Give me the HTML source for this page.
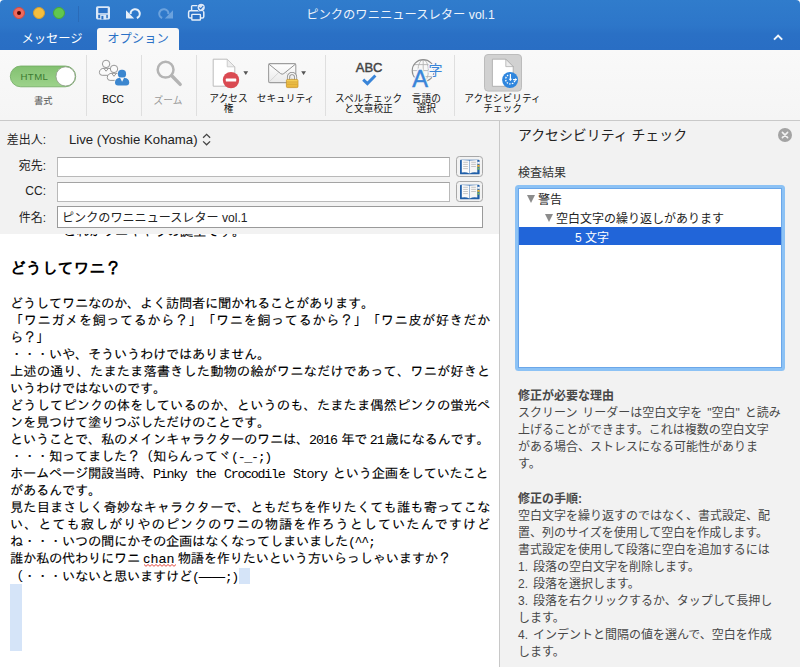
<!DOCTYPE html>
<html lang="ja">
<head>
<meta charset="utf-8">
<title>ピンクのワニニュースレター vol.1</title>
<style>
*{box-sizing:border-box;margin:0;padding:0}
html,body{width:800px;height:667px;overflow:hidden;background:#f2f2f2}
body{font-family:"Liberation Sans","Noto Sans CJK JP",sans-serif;color:#222;position:relative;-webkit-font-smoothing:antialiased}
.abs{position:absolute}
#titlebar{position:absolute;left:0;top:0;width:800px;height:50px;border-radius:4px 4px 0 0;background:linear-gradient(#307ccc 0,#2d76c9 26px,#2a70c5 34px,#296ec4 50px)}
#title{position:absolute;left:0;width:801px;top:6.2px;text-align:center;color:#eef4fb;font-size:12.3px;line-height:18px}
.tl{position:absolute;top:7px;width:12px;height:12px;border-radius:50%}
.tab{position:absolute;top:28px;height:22px;font-size:12.3px;line-height:23px;color:#fff;text-align:center}
#tab2{left:97px;width:82px;background:#f8f8f8;color:#2b71c6;border-radius:3px 3px 0 0}
#ribbon{position:absolute;left:0;top:50px;width:800px;height:71px;background:linear-gradient(#f9f9f9,#f5f5f5);border-bottom:1px solid #c9c9c9}
.sep{position:absolute;top:5px;width:1px;height:61px;background:#dfdfdf}
.lbl{position:absolute;font-size:9.7px;line-height:10px;text-align:center;color:#111;white-space:nowrap;transform:translateX(-50%)}
#hdr{position:absolute;left:0;top:121px;width:499px;height:113px;background:#f2f2f2}
.flabel{position:absolute;width:46px;left:0;text-align:right;font-size:12px;line-height:16px;color:#222}
.inp{position:absolute;left:57px;height:20px;background:#fff;border:1px solid #b9b9b9;border-top-color:#a4a4a4}
.abook{position:absolute;left:456px;width:27px;height:21px;border:1px solid #a8a8a8;border-radius:3.5px;background:#f2f2f2}
#body{position:absolute;left:0;top:234px;width:499px;height:433px;background:#fff;overflow:hidden}
.bl{position:absolute;left:10px;letter-spacing:-0.33px;white-space:pre;font-family:"Liberation Mono","IPAGothic",monospace;font-size:13.33px;line-height:17px;color:#000;-webkit-text-stroke:0.1px #000}
.bl .a{font-family:"Liberation Mono","IPAGothic",monospace;letter-spacing:-1.33px;-webkit-text-stroke:0}
.bl.j{width:480px;text-align:justify;text-align-last:justify}
.bl.h{font-size:16px;font-weight:bold;line-height:20px;letter-spacing:-0.15px;-webkit-text-stroke:0}
.bl .d{letter-spacing:-1px;-webkit-text-stroke:0}
.bl .k{font-family:"Liberation Sans","IPAGothic",sans-serif}
.bl .w{letter-spacing:-1.28px;word-spacing:1.9px}
.bl .g{display:inline-block;width:3px}
.bl .c{font-family:"Liberation Sans",sans-serif;font-size:13.33px;letter-spacing:0.7px;line-height:10px;}
.sel{position:absolute;background:#d5e4f8}
#vdiv{position:absolute;left:499px;top:121px;width:1px;height:546px;background:#c8c8c8}
#pane{position:absolute;left:500px;top:121px;width:300px;height:546px;background:#f2f2f2}
.pt{position:absolute;white-space:nowrap;color:#333}
.pl{left:18px;font-size:12px;line-height:17px;color:#484848}
#ring{position:absolute;left:15px;top:64px;width:270px;height:186px;background:#8cc2f5;border-radius:3.5px;padding:3px}
#list{position:relative;width:264px;height:180px;background:#fff;border:1px solid #6ba7e9;overflow:hidden}
.row{position:absolute;left:0;width:262px;height:18px;font-size:12px;line-height:17px;color:#222}
.rt{position:absolute;top:0;white-space:nowrap}
.selrow{background:#2165d9;color:#fff;height:18px}
.tri{position:absolute;top:3px;width:0;height:0;border-left:4.5px solid transparent;border-right:4.5px solid transparent;border-top:8px solid #8c8c8c}
</style>
</head>
<body>
<div class="abs" style="left:0;top:0;width:800px;height:8px;background:#fff"></div>
<div id="titlebar">
  <div class="tl" style="left:13px;background:#ee6a5e;border:0.5px solid #cf4c42"></div>
  <div class="tl" style="left:33px;background:#f5be3f;border:0.5px solid #d6a030"></div>
  <div class="tl" style="left:53px;background:#61c74f;border:0.5px solid #4aa83a"></div>
  <div class="abs" style="left:15px;top:9px;width:8px;height:8px"><div style="margin:2px;width:4px;height:4px;border-radius:50%;background:#4d0502"></div></div>
  <div class="abs" style="left:78px;top:6px;width:1px;height:16px;background:#2a6bb8"></div>
  <svg class="abs" style="left:0;top:0" width="800" height="28" viewBox="0 0 800 28">
    <!-- save -->
    <rect x="96" y="6.2" width="14" height="13.2" rx="1.6" fill="#dbe8f7"/>
    <rect x="98.3" y="8" width="9.4" height="5.2" fill="#2b71c6"/>
    <rect x="98.2" y="14.7" width="9.6" height="3.5" fill="#2b71c6"/>
    <rect x="100.2" y="14.7" width="6.1" height="4.7" fill="#dbe8f7"/>
    <rect x="101.4" y="15.9" width="2" height="3.5" fill="#2b71c6"/>
    <!-- undo -->
    <path d="M126 10.3 L126 18.4 L134.2 18.4 Z" fill="#e6eff9"/>
    <path d="M130.6 14.2 A4.6 4.6 0 1 1 136.8 18.1" fill="none" stroke="#e6eff9" stroke-width="2.1"/>
    <!-- redo -->
    <path d="M173 10.3 L173 18.4 L164.8 18.4 Z" fill="#6ba2dd"/>
    <path d="M168.4 14.2 A4.6 4.6 0 1 0 162.2 18.1" fill="none" stroke="#6ba2dd" stroke-width="2.1"/>
    <!-- print -->
    <rect x="191.6" y="5.6" width="8.8" height="6" rx="0.8" fill="none" stroke="#e6eff9" stroke-width="1.4"/>
    <rect x="188.6" y="10.8" width="15.2" height="7.2" rx="1.6" fill="#2b71c6" stroke="#e6eff9" stroke-width="1.5"/>
    <rect x="191.8" y="14.4" width="8.6" height="5.6" rx="0.6" fill="#2b71c6" stroke="#e6eff9" stroke-width="1.4"/>
    <circle cx="201.2" cy="7.4" r="4.3" fill="#2b71c6"/>
    <circle cx="201.2" cy="7.4" r="3.6" fill="#dbe8f7"/>
    <path d="M199.3 7.5 L200.7 8.9 L203.2 6" fill="none" stroke="#2b71c6" stroke-width="1.1"/>
  </svg>
  <svg class="abs" style="left:770px;top:30px" width="16" height="14" viewBox="770 30 16 14"><path d="M774 39.6 L778.1 35.6 L782.2 39.6" fill="none" stroke="#f2f6fb" stroke-width="2"/></svg>
  <div id="title">ピンクのワニニュースレター vol.1</div>
  <div class="tab" style="left:14px;width:76px">メッセージ</div>
  <div class="tab" id="tab2">オプション</div>
</div>
<div id="ribbon">
  <svg class="abs" style="left:0;top:0" width="800" height="71" viewBox="0 50 800 71">
    <defs>
      <linearGradient id="gtog" x1="0" y1="0" x2="0" y2="1"><stop offset="0" stop-color="#82c070"/><stop offset="1" stop-color="#9dd38b"/></linearGradient>
      <linearGradient id="genv" x1="0" y1="0" x2="0" y2="1"><stop offset="0" stop-color="#ffffff"/><stop offset="1" stop-color="#e9e9e9"/></linearGradient>
      <linearGradient id="glock" x1="0" y1="0" x2="0" y2="1"><stop offset="0" stop-color="#f7d45e"/><stop offset="1" stop-color="#e8b236"/></linearGradient>
    </defs>
    <!-- toggle -->
    <rect x="10.3" y="66" width="65.4" height="20.8" rx="10.4" fill="url(#gtog)" stroke="#6fa95f" stroke-width="0.8"/>
    <circle cx="65.6" cy="76.4" r="9.6" fill="#ffffff" stroke="#8e9a88" stroke-width="0.8"/>
    <text x="34.4" y="79.8" font-family="Liberation Sans, sans-serif" font-size="9.6" letter-spacing="0.45" fill="#3b7a30" text-anchor="middle">HTML</text>
    <!-- BCC -->
    <g fill="#fbfbfb" stroke="#8c8c8c" stroke-width="0.9">
      <path d="M99.4 72.5 C99.4 69.9 101.4 68.3 104.0 68.3 L108.2 68.3 C110.8 68.3 112.8 69.9 112.8 72.5 L112.8 72.5 Q112.8 75.3 110.0 75.3 L102.2 75.3 Q99.4 75.3 99.4 72.5 Z"/>
      <circle cx="106.1" cy="63.9" r="3.7"/>
      <path d="M103.8 68.4 L106.1 71.2 L108.4 68.4" fill="none"/>
      <path d="M107.3 77.6 C107.3 74.9 109.3 73.3 111.9 73.3 L116.1 73.3 C118.7 73.3 120.7 74.9 120.7 77.6 L120.7 77.6 Q120.7 80.4 117.9 80.4 L110.1 80.4 Q107.3 80.4 107.3 77.6 Z"/>
      <circle cx="114" cy="68.9" r="3.7"/>
      <path d="M111.7 73.4 L114 76.3 L116.3 73.4" fill="none"/>
    </g>
    <path d="M115.0 82.5 C115.0 79.5 117.0 77.9 119.6 77.9 L124.6 77.9 C127.2 77.9 129.2 79.5 129.2 82.5 L129.2 82.6 Q129.2 85.6 126.2 85.6 L118.0 85.6 Q115.0 85.6 115.0 82.6 Z" fill="#3b86cf" stroke="#f7f7f7" stroke-width="1.4"/>
    <circle cx="122" cy="73.9" r="4.1" fill="#3b86cf" stroke="#f7f7f7" stroke-width="1.2"/>
    <path d="M115.0 82.5 C115.0 79.5 117.0 77.9 119.6 77.9 L124.6 77.9 C127.2 77.9 129.2 79.5 129.2 82.5 L129.2 82.6 Q129.2 85.6 126.2 85.6 L118.0 85.6 Q115.0 85.6 115.0 82.6 Z" fill="#3b86cf"/>
    <circle cx="122" cy="73.9" r="4.1" fill="#3b86cf"/>
    <path d="M119.9 77.6 L122.1 81.7 L124.3 77.6 Z" fill="#f7f7f7"/>
    <!-- zoom -->
    <circle cx="165.6" cy="69.7" r="7.9" fill="none" stroke="#b4b4b4" stroke-width="2.5"/>
    <path d="M171.8 75.8 L180.2 84.4" stroke="#b4b4b4" stroke-width="3.4" stroke-linecap="round"/>
    <!-- access -->
    <path d="M213.2 59.2 L227.2 59.2 L234.8 66.8 L234.8 86.2 L213.2 86.2 Z" fill="#ffffff" stroke="#bcbcbc" stroke-width="1"/>
    <path d="M227.2 59.2 L227.2 66.8 L234.8 66.8 Z" fill="#ededed" stroke="#c4c4c4" stroke-width="0.8"/>
    <circle cx="231" cy="80.1" r="8.2" fill="#da4a52"/>
    <rect x="225.8" y="78.6" width="10.4" height="3" rx="0.6" fill="#ffffff"/>
    <path d="M243.4 71.2 L248.2 71.2 L245.8 75 Z" fill="#555"/>
    <!-- security -->
    <rect x="268.6" y="63.6" width="27.2" height="19" rx="1.4" fill="url(#genv)" stroke="#9e9e9e" stroke-width="1.1"/>
    <path d="M268.9 82.2 L278.6 72.6 M295.5 82.2 L285.8 72.6" fill="none" stroke="#cfcfcf" stroke-width="0.8"/>
    <path d="M269 64.2 L280.6 73.6 Q282.2 74.8 283.8 73.6 L295.4 64.2" fill="none" stroke="#929292" stroke-width="1"/>
    <path d="M288.5 80 V77.1 A3.55 3.55 0 0 1 295.6 77.1 V80" fill="none" stroke="#8a8a8a" stroke-width="3.1"/>
    <path d="M288.5 80 V77.1 A3.55 3.55 0 0 1 295.6 77.1 V80" fill="none" stroke="#f2f2f2" stroke-width="1.5"/>
    <rect x="286.4" y="79.4" width="11.6" height="8.2" rx="1.2" fill="url(#glock)" stroke="#c08c22" stroke-width="0.7"/>
    <path d="M287 82 H297.4 M287 84.2 H297.4" stroke="#d29f32" stroke-width="0.8"/>
    <path d="M301.2 71.2 L306 71.2 L303.6 75 Z" fill="#555"/>
    <!-- ABC -->
    <text x="369.1" y="71.6" font-family="Liberation Sans, sans-serif" font-size="13" fill="#444" stroke="#444" stroke-width="0.45" text-anchor="middle">ABC</text>
    <path d="M363.2 79.6 L367.4 83.6 L375.4 75.4" fill="none" stroke="#3a85d8" stroke-width="2.9"/>
    <!-- language -->
    <g fill="none" stroke="#b4b4b4" stroke-width="0.9">
      <ellipse cx="423.2" cy="70.6" rx="5.2" ry="11"/>
      <path d="M423.2 59.6 V81.6 M412.2 70.6 H434.2 M414 64.6 H432.4 M414 76.6 H432.4"/>
    </g>
    <circle cx="423.2" cy="70.6" r="11" fill="none" stroke="#8e8e8e" stroke-width="1.1"/>
    <text x="420.1" y="86.9" font-family="Liberation Sans, sans-serif" font-size="23.6" fill="#f6f6f6" stroke="#f6f6f6" stroke-width="3" text-anchor="middle">A</text>
    <text x="420.1" y="86.9" font-family="Liberation Sans, sans-serif" font-size="23.6" fill="#3a85d8" stroke="#3a85d8" stroke-width="0.5" text-anchor="middle">A</text>
    <text x="435.5" y="75.3" font-family="Liberation Sans, Noto Sans CJK JP, sans-serif" font-size="14" fill="#3a85d8" stroke="#f6f6f6" stroke-width="2" paint-order="stroke" text-anchor="middle">字</text>
    <!-- accessibility -->
    <rect x="484.5" y="54.5" width="37" height="36.6" rx="3.5" fill="#d1d1d1" stroke="#bcbcbc" stroke-width="1"/>
    <path d="M492.4 59.2 L505.8 59.2 L513.2 66.6 L513.2 86.3 L492.4 86.3 Z" fill="#ffffff" stroke="#a6a6a6" stroke-width="0.8"/>
    <path d="M505.8 59.2 L505.8 66.6 L513.2 66.6 Z" fill="#ececec" stroke="#a6a6a6" stroke-width="0.7"/>
    <circle cx="510.1" cy="80" r="8" fill="#2f86de"/>
    <path d="M508.2 75.1 A4.7 4.7 0 1 0 514.9 80.6" fill="none" stroke="#ffffff" stroke-width="1.3" stroke-dasharray="1.5 1.2"/>
    <path d="M510.4 73.9 V80.2" fill="none" stroke="#ffffff" stroke-width="1.2"/>
    <path d="M508.6 78.8 L510.4 81 L512.2 78.8 Z" fill="#ffffff"/>
    <path d="M513 79.6 H516" fill="none" stroke="#ffffff" stroke-width="1.1"/>
    <path d="M515.2 77.9 L517.2 79.6 L515.2 81.3 Z" fill="#ffffff"/>
  </svg>
  <div class="sep" style="left:86px"></div>
  <div class="sep" style="left:141px"></div>
  <div class="sep" style="left:196px"></div>
  <div class="sep" style="left:325px"></div>
  <div class="sep" style="left:454px"></div>
  <div class="lbl" style="left:43.2px;top:46.3px;color:#555;font-size:9.3px">書式</div>
  <div class="lbl" style="left:113px;top:44.5px;font-size:10.2px">BCC</div>
  <div class="lbl" style="left:168px;top:46px;color:#9a9a9a">ズーム</div>
  <div class="lbl" style="left:228.5px;top:44.3px">アクセス<br>権</div>
  <div class="lbl" style="left:285.5px;top:44.3px">セキュリティ</div>
  <div class="lbl" style="left:368.6px;top:44.3px">スペルチェック<br>と文章校正</div>
  <div class="lbl" style="left:426.3px;top:44.3px">言語の<br>選択</div>
  <div class="lbl" style="left:502.5px;top:44.3px">アクセシビリティ<br>チェック</div>
</div>
<div id="hdr">
  <div class="flabel" style="top:11px">差出人:</div>
  <div class="abs" style="left:69px;top:10.5px;font-size:13.2px;line-height:16px;color:#222;white-space:nowrap">Live (Yoshie Kohama)</div>
  <svg class="abs" style="left:200px;top:10px" width="14" height="16" viewBox="200 131 14 16"><path d="M203.1 137.8 L206.6 134.4 L210.1 137.8 M203.1 141.4 L206.6 144.8 L210.1 141.4" fill="none" stroke="#444" stroke-width="1.3"/></svg>
  <div class="flabel" style="top:37px">宛先:</div>
  <div class="inp" style="top:36px;width:393px"></div>
  <div class="abook" style="top:35px"><svg width="27" height="21" viewBox="0 0 27 21" style="display:block;position:absolute;left:-1px;top:-1px"><path d="M4 4.6 Q4 3.8 4.8 3.8 L22.4 3.8 Q23.6 3.8 23.6 5 L23.6 17.4 Q23.6 18.3 22.7 18.3 L4.9 18.3 Q4 18.3 4 17.4 Z" fill="#1f5ea8"/><path d="M5.8 3.9 L13.4 4.4 L13.4 17.4 Q9.6 15.6 5.8 16.6 Z" fill="#fbfbfb"/><path d="M21.3 3.9 L13.7 4.4 L13.7 17.4 Q17.5 15.6 21.3 16.6 Z" fill="#f6f6f6"/><path d="M7.2 6.3 H11.9 M7.2 8.4 H11.9 M7.2 10.5 H11.9 M7.2 12.6 H11.9 M15.2 6.3 H19.9 M15.2 8.4 H19.9 M15.2 10.5 H19.9" stroke="#b9b9b9" stroke-width="0.8"/><rect x="21.3" y="5.8" width="2.5" height="2" fill="#fafafa"/><rect x="21.3" y="8.8" width="2.3" height="2" fill="#f0b72e"/><rect x="21.3" y="11.6" width="2.3" height="2" fill="#7db85c"/></svg></div>
  <div class="flabel" style="top:62px">CC:</div>
  <div class="inp" style="top:61px;width:393px"></div>
  <div class="abook" style="top:60px"><svg width="27" height="21" viewBox="0 0 27 21" style="display:block;position:absolute;left:-1px;top:-1px"><path d="M4 4.6 Q4 3.8 4.8 3.8 L22.4 3.8 Q23.6 3.8 23.6 5 L23.6 17.4 Q23.6 18.3 22.7 18.3 L4.9 18.3 Q4 18.3 4 17.4 Z" fill="#1f5ea8"/><path d="M5.8 3.9 L13.4 4.4 L13.4 17.4 Q9.6 15.6 5.8 16.6 Z" fill="#fbfbfb"/><path d="M21.3 3.9 L13.7 4.4 L13.7 17.4 Q17.5 15.6 21.3 16.6 Z" fill="#f6f6f6"/><path d="M7.2 6.3 H11.9 M7.2 8.4 H11.9 M7.2 10.5 H11.9 M7.2 12.6 H11.9 M15.2 6.3 H19.9 M15.2 8.4 H19.9 M15.2 10.5 H19.9" stroke="#b9b9b9" stroke-width="0.8"/><rect x="21.3" y="5.8" width="2.5" height="2" fill="#fafafa"/><rect x="21.3" y="8.8" width="2.3" height="2" fill="#f0b72e"/><rect x="21.3" y="11.6" width="2.3" height="2" fill="#7db85c"/></svg></div>
  <div class="flabel" style="top:89px">件名:</div>
  <div class="inp" style="top:85px;width:426px;height:22px;border-color:#9a9a9a"><div style="position:absolute;left:4px;top:3px;font-size:12.1px;line-height:16px;white-space:nowrap;color:#222">ピンクのワニニュースレター vol.1</div></div>
</div>
<div id="body">
  <div class="bl" style="left:63px;top:-10px">これがワニキャラの誕生です。</div>
  <div class="bl h" style="top:26px">どうしてワニ？</div>
  <div class="bl" style="top:62px">どうしてワニなのか、よく訪問者に聞かれることがあります。</div>
  <div class="bl j" style="top:79px">「ワニガメを飼ってるから？」「ワニを飼ってるから？」「ワニ皮が好きだか</div>
  <div class="bl" style="top:96px">ら？」</div>
  <div class="bl" style="top:113px">・・・いや、そういうわけではありません。</div>
  <div class="bl j" style="top:130px">上述の通り、たまたま落書きした動物の絵がワニなだけであって、ワニが好きと</div>
  <div class="bl" style="top:147px">いうわけではないのです。</div>
  <div class="bl j" style="top:164px">どうしてピンクの体をしているのか、というのも、たまたま偶然ピンクの蛍光ペ</div>
  <div class="bl" style="top:181px">ンを見つけて塗りつぶしただけのことです。</div>
  <div class="bl" style="top:198px">ということで、私のメインキャラクターのワニは、<span class="d">2016</span><span class="g" style="width:4.3px"></span>年で<span class="g" style="width:2.5px"></span><span class="d">21</span><span class="g" style="width:1.8px"></span>歳になるんです。</div>
  <div class="bl" style="top:215px">・・・知ってました？（知らんってヾ<span class="a">(-_-;)</span></div>
  <div class="bl" style="top:232px">ホームページ開設当時、<span class="a w">Pinky the Crocodile Story</span><span class="g" style="width:6px"></span>という企画をしていたこと</div>
  <div class="bl" style="top:249px">があるんです。</div>
  <div class="bl j" style="top:266px">見た目まさしく奇妙なキャラクターで、ともだちを作りたくても誰も寄ってこな</div>
  <div class="bl j" style="top:283px">い、とても寂しがりやのピンクのワニの物語を作ろうとしていたんですけど</div>
  <div class="bl" style="top:300px">ね・・・いつの間にかその企画はなくなってしまいました<span class="a">(^^;</span></div>
  <div class="bl" style="top:317px">誰か私の代わりにワニ<span class="g" style="width:3.3px"></span><span class="c">chan</span><span class="g" style="width:2.8px"></span>物語を作りたいという方いらっしゃいますか？</div>
  <div class="bl" style="top:334px">（・・・いないと思いますけど<span class="a">(</span><span class="k">——</span><span class="a">;)</span></div>
  <svg class="abs" style="left:143.5px;top:329.6px" width="33" height="3" viewBox="0 0 33 3"><path d="M0 0.5 L2 2.3 L4 0.5 L6 2.3 L8 0.5 L10 2.3 L12 0.5 L14 2.3 L16 0.5 L18 2.3 L20 0.5 L22 2.3 L24 0.5 L26 2.3 L28 0.5 L30 2.3 L32 0.5" fill="none" stroke="#e2372b" stroke-width="0.9"/></svg>
  <div class="sel" style="left:239px;top:334px;width:11px;height:16px"></div>
  <div class="sel" style="left:10px;top:350px;width:12px;height:67px"></div>
</div>
<div id="vdiv"></div>
<div id="pane">
  <div class="pt" style="left:18px;top:4.3px;font-size:13.9px;line-height:20px;color:#222">アクセシビリティ チェック</div>
  <div class="abs" style="left:278px;top:7px;width:14px;height:14px;border-radius:50%;background:#a3a3a3"><svg width="14" height="14" viewBox="0 0 14 14" style="display:block"><path d="M4.4 4.4 L9.6 9.6 M9.6 4.4 L4.4 9.6" stroke="#f2f2f2" stroke-width="1.6" stroke-linecap="round"/></svg></div>
  <div class="pt" style="left:18px;top:43.5px;font-size:12px;line-height:17px">検査結果</div>
  <div id="ring"><div id="list">
    <div class="row" style="top:3px"><span class="tri" style="left:8px"></span><span style="left:19px" class="rt">警告</span></div>
    <div class="row" style="top:22.3px"><span class="tri" style="left:26px"></span><span style="left:37px" class="rt">空白文字の繰り返しがあります</span></div>
    <div class="row selrow" style="top:38px"><span style="left:56px;top:2.6px" class="rt">5 文字</span></div>
  </div></div>
  <div class="pt pl" style="top:267.3px;font-weight:bold;">修正が必要な理由</div>
  <div class="pt pl" style="top:284.3px;"><span style="word-spacing:1.6px">スクリーン リーダーは空白文字を "空白" と読み</span></div>
  <div class="pt pl" style="top:301.3px;">上げることができます。これは複数の空白文字</div>
  <div class="pt pl" style="top:318.3px;">がある場合、ストレスになる可能性がありま</div>
  <div class="pt pl" style="top:335.3px;">す。</div>
  <div class="pt pl" style="top:370.3px;font-weight:bold;">修正の手順:</div>
  <div class="pt pl" style="top:387.3px;">空白文字を繰り返すのではなく、書式設定、配</div>
  <div class="pt pl" style="top:404.3px;">置、列のサイズを使用して空白を作成します。</div>
  <div class="pt pl" style="top:421.3px;">書式設定を使用して段落に空白を追加するには</div>
  <div class="pt pl" style="top:438.3px;"><span style="word-spacing:1.6px">1. 段落の空白文字を削除します。</span></div>
  <div class="pt pl" style="top:455.3px;"><span style="word-spacing:1.6px">2. 段落を選択します。</span></div>
  <div class="pt pl" style="top:472.3px;"><span style="word-spacing:1.6px">3. 段落を右クリックするか、タップして長押し</span></div>
  <div class="pt pl" style="top:489.3px;">します。</div>
  <div class="pt pl" style="top:506.3px;"><span style="word-spacing:1.6px">4. インデントと間隔の値を選んで、空白を作成</span></div>
  <div class="pt pl" style="top:523.3px;">します。</div>
</div>
</body>
</html>
